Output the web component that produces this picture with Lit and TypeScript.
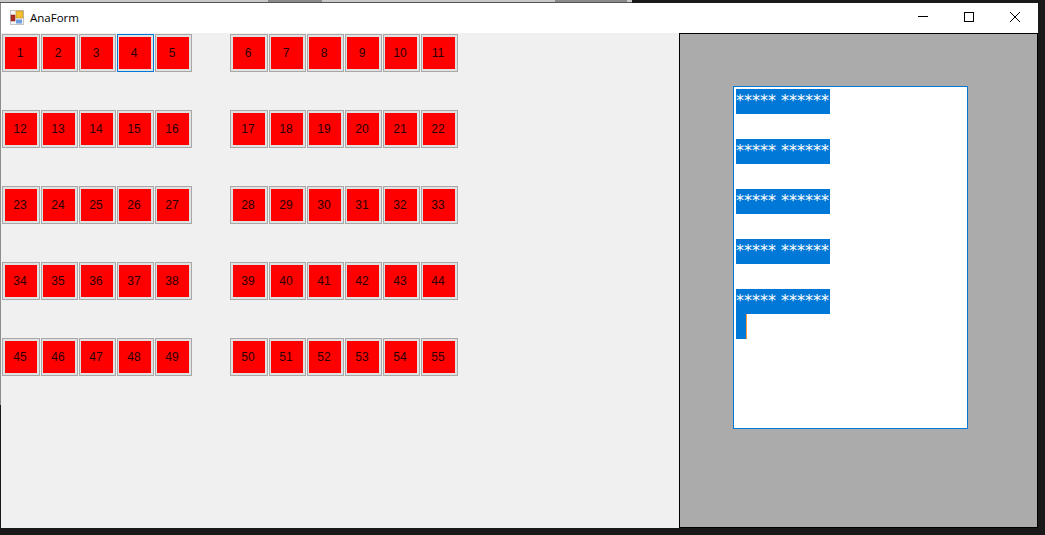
import { LitElement, html, css, svg } from "lit";
import { customElement } from "lit/decorators.js";

const ROWS = [0, 1, 2, 3, 4];

@customElement("app-root")
export class AppRoot extends LitElement {
  static styles = css`
    :host { display: block; width: 1045px; height: 535px; background: #191919; overflow: hidden; font-family: "Liberation Sans", Arial, sans-serif; }
    .strip { display: flex; height: 3px; box-sizing: border-box; border-bottom: 1px solid #555; background: #c8c8c8; width: 632px; }
    .strip .a { width: 268px; }
    .strip .b { width: 54px; background: #8a8a8a; }
    .strip .c { width: 233px; }
    .strip .d { width: 72px; background: #8a8a8a; }
    .body { display: flex; }
    .edge { width: 1px; height: 402px; background: #8c8c8c; flex: none; }
    .window { width: 1037px; flex: none; }
    .title { height: 30px; box-sizing: border-box; padding-bottom: 2px; background: #fff; display: flex; align-items: center; color: #000; }
    .app-icon { margin-left: 9px; width: 14px; height: 15px; flex: none; }
    .name { margin-left: 6px; font: 11.5px "Open Sans", "Noto Sans", sans-serif; flex: 1; }
    .ctl { width: 46px; height: 28px; display: flex; align-items: center; justify-content: center; flex: none; }
    .ctl svg { width: 12px; height: 12px; display: block; }
    .client { display: flex; height: 495px; }
    .left { width: 678px; background: #f0f0f0; padding: 1px 0 0 1px; box-sizing: border-box; display: flex; flex-direction: column; gap: 38px; }
    .row { display: flex; gap: 38px; height: 38px; }
    .group { display: flex; }
    .btn { width: 38px; height: 38px; box-sizing: border-box; border: 1px solid #a8a8a8; background: #e1e1e1; padding: 2px; flex: none; }
    .btn + .btn { width: 37px; margin-left: 1px; padding-left: 1px; }
    .btn.focus { border-color: #0078d7; }
    .face { width: 32px; height: 32px; box-sizing: border-box; padding-right: 2px; background: #f00; color: #2a0000; font-size: 12px; display: flex; align-items: center; justify-content: center; }
    .right { width: 359px; box-sizing: border-box; border: 1px solid #000; background: #ababab; padding: 52px 0 0 53px; }
    .doc { width: 235px; height: 343px; box-sizing: border-box; border: 1px solid #0078d7; background: #fff; padding: 2px; display: flex; flex-direction: column; font: 16px "DejaVu Sans", sans-serif; color: #fff; }
    .sel { width: 94px; height: 25px; background: #0078d7; white-space: pre; line-height: 23px; box-sizing: border-box; flex: none; overflow: hidden; }
    .blank { height: 25px; flex: none; }
    .last { width: 11px; height: 25px; box-sizing: border-box; background: #0078d7; border-right: 1px solid #ff9a3c; flex: none; }
  `;

  private button(n: number) {
    return html`<div class="btn ${n === 4 ? "focus" : ""}"><div class="face">${n}</div></div>`;
  }

  render() {
    return html`
      <div class="strip"><div class="a"></div><div class="b"></div><div class="c"></div><div class="d"></div></div>
      <div class="body">
        <div class="edge"></div>
        <div class="window">
          <div class="title">
            <svg class="app-icon" viewBox="0 0 14 15">
              <rect x="0" y="0" width="14" height="15" fill="#c4c4c4" />
              <rect x="1" y="1" width="12" height="13" fill="#f4f4f4" />
              <rect x="1" y="5" width="4" height="6" fill="#b02a20" stroke="#7a1d16" stroke-width=".5" />
              <rect x="6" y="1" width="7" height="7" fill="#f3c02f" stroke="#b98a1e" stroke-width=".6" />
              <rect x="6" y="9.5" width="6" height="4" fill="#6f9be0" />
            </svg>
            <div class="name">AnaForm</div>
            <div class="ctl"><svg viewBox="0 0 12 12">${svg`<path d="M1 5.5H11" stroke="#000" fill="none" />`}</svg></div>
            <div class="ctl"><svg viewBox="0 0 12 12">${svg`<rect x="1.5" y="1.5" width="9" height="9" stroke="#000" fill="none" />`}</svg></div>
            <div class="ctl"><svg viewBox="0 0 12 12">${svg`<path d="M1 1L11 11M11 1L1 11" stroke="#000" fill="none" />`}</svg></div>
          </div>
          <div class="client">
            <div class="left">
              ${ROWS.map((r) => {
                const base = r * 11;
                return html`<div class="row">
                  <div class="group">${[1, 2, 3, 4, 5].map((i) => this.button(base + i))}</div>
                  <div class="group">${[6, 7, 8, 9, 10, 11].map((i) => this.button(base + i))}</div>
                </div>`;
              })}
            </div>
            <div class="right">
              <div class="doc">
                ${ROWS.map((r) => html`<div class="sel">***** ******</div>${r < 4 ? html`<div class="blank"></div>` : ""}`)}
                <div class="last"></div>
              </div>
            </div>
          </div>
        </div>
      </div>
    `;
  }
}
